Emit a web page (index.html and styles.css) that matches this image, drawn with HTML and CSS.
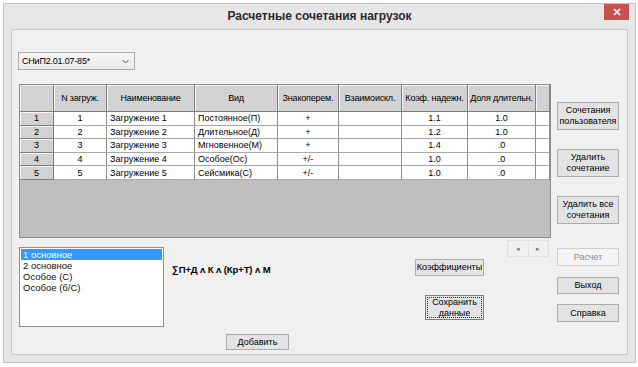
FILE: index.html
```html
<!DOCTYPE html>
<html lang="ru">

<head>
    <meta charset="UTF-8">
    <title>Расчетные сочетания нагрузок</title>
    <link rel="stylesheet" href="styles.css">
</head>

<body>
    <div class="window">
        <div class="titlebar">
            <span></span>
            <h1 class="title">Расчетные сочетания нагрузок</h1>
            <button class="close" title="Закрыть">
                <svg width="8" height="8" viewBox="0 0 8 8"><path d="M1 1L7 7M7 1L1 7" stroke="#fff" stroke-width="1.6"/></svg>
            </button>
        </div>

        <div class="client">
            <div class="combo">
                <span>СНиП2.01.07-85*</span>
                <svg width="7" height="5" viewBox="0 0 7 5"><path d="M0.5 1L3.5 4L6.5 1" fill="none" stroke="#555" stroke-width="1"/></svg>
            </div>

            <div class="main">
                <div class="left">
                    <div class="grid">
                        <table>
                            <thead>
                                <tr>
                                    <th class="c-rh"></th>
                                    <th class="c-n">N загруж.</th>
                                    <th class="c-name">Наименование</th>
                                    <th class="c-kind">Вид</th>
                                    <th class="c-sign">Знакоперем.</th>
                                    <th class="c-excl">Взаимоискл.</th>
                                    <th class="c-coef">Коэф. надежн.</th>
                                    <th class="c-long">Доля длительн.</th>
                                    <th class="c-end"></th>
                                </tr>
                            </thead>
                            <tbody>
                                <tr>
                                    <th>1</th><td class="center">1</td><td>Загружение 1</td><td>Постоянное(П)</td>
                                    <td class="center">+</td><td></td><td class="center">1.1</td><td class="center">1.0</td><td></td>
                                </tr>
                                <tr>
                                    <th>2</th><td class="center">2</td><td>Загружение 2</td><td>Длительное(Д)</td>
                                    <td class="center">+</td><td></td><td class="center">1.2</td><td class="center">1.0</td><td></td>
                                </tr>
                                <tr>
                                    <th>3</th><td class="center">3</td><td>Загружение 3</td><td>Мгновенное(М)</td>
                                    <td class="center">+</td><td></td><td class="center">1.4</td><td class="center">.0</td><td></td>
                                </tr>
                                <tr>
                                    <th>4</th><td class="center">4</td><td>Загружение 4</td><td>Особое(Ос)</td>
                                    <td class="center">+/-</td><td></td><td class="center">1.0</td><td class="center">.0</td><td></td>
                                </tr>
                                <tr>
                                    <th>5</th><td class="center">5</td><td>Загружение 5</td><td>Сейсмика(С)</td>
                                    <td class="center">+/-</td><td></td><td class="center">1.0</td><td class="center">.0</td><td></td>
                                </tr>
                            </tbody>
                        </table>
                    </div>

                    <div class="bottom">
                        <div class="col-list">
                            <ul class="listbox">
                                <li class="selected">1 основное</li>
                                <li>2 основное</li>
                                <li>Особое (С)</li>
                                <li>Особое (б/С)</li>
                            </ul>
                        </div>
                        <div class="col-formula">
                            <p class="formula">∑П+Д ʌ К ʌ (Кр+Т) ʌ М</p>
                            <button class="btn btn-add">Добавить</button>
                        </div>
                        <div class="col-coef">
                            <button class="btn btn-coef">Коэффициенты</button>
                            <button class="btn btn-save focused"><span>Сохранить<br>данные</span></button>
                        </div>
                        <div class="col-scroll">
                            <div class="scroll">
                                <span>◂</span>
                                <span>▸</span>
                            </div>
                        </div>
                    </div>
                </div>

                <div class="side">
                    <button class="btn btn-tall">Сочетания<br>пользователя</button>
                    <button class="btn btn-tall">Удалить<br>сочетание</button>
                    <button class="btn btn-tall">Удалить все<br>сочетания</button>
                    <button class="btn btn-side btn-calc" disabled>Расчет</button>
                    <button class="btn btn-side btn-exit">Выход</button>
                    <button class="btn btn-side btn-help">Справка</button>
                </div>
            </div>
        </div>
    </div>
</body>

</html>
```

FILE: styles.css
```css
* {
    box-sizing: border-box;
}

body {
    margin: 0;
    background: #fff;
    font-family: "Liberation Sans", Arial, sans-serif;
    font-size: 9px;
    color: #000;
}

.window {
    margin: 3px 0 0 3px;
    width: 633px;
    height: 360px;
    border: 1px solid #c2c2c2;
    background: #e6e6e6;
    padding: 0 6px 6px 7px;
}

.titlebar {
    display: grid;
    grid-template-columns: 1fr auto 1fr;
    height: 25px;
    margin: 0 -6px 0 -7px;
}

.title {
    margin: 0;
    font-size: 12px;
    font-weight: bold;
    line-height: 25px;
    color: #2b2b2b;
}

.close {
    justify-self: end;
    align-self: start;
    width: 25px;
    height: 16px;
    margin-right: 6px;
    border: none;
    padding: 0;
    background: #c75050;
    display: flex;
    justify-content: center;
    align-items: center;
}

.client {
    width: 617px;
    height: 326px;
    border: 1px solid #c9c9c9;
    background: #f0f0f0;
    padding: 22px 0 0 7px;
}

/* combo */
.combo {
    width: 117px;
    height: 18px;
    margin-left: -1px;
    border: 1px solid #acacac;
    background: linear-gradient(#f6f6f6, #ebebeb);
    display: flex;
    align-items: center;
    justify-content: space-between;
    padding: 0 5px 0 3px;
    letter-spacing: -0.2px;
}

.main {
    display: flex;
    margin-top: 14px;
}

.left {
    width: 532px;
}

/* grid */
.grid {
    height: 154px;
    background: #bfbfbf;
    border: 1px solid #8c8c8c;
}

.grid table {
    width: 530px;
    table-layout: fixed;
    border-collapse: separate;
    border-spacing: 0;
}

.grid th,
.grid td {
    padding: 0 3px;
    overflow: hidden;
    white-space: nowrap;
    font-weight: normal;
}

.grid th {
    padding: 0;
    background: #d2d2d2;
    border-right: 1px solid #7f7f7f;
    border-bottom: 1px solid #7f7f7f;
    box-shadow: inset 1px 1px #f4f4f4;
    text-align: center;
}

.grid thead th {
    height: 27px;
    letter-spacing: -0.2px;
}

.grid td {
    height: 13.6px;
    background: #fff;
    border-right: 1px solid #8f8f8f;
    border-bottom: 1px solid #a8a8a8;
    line-height: 12px;
}

.grid tbody th {
    height: 13.6px;
    line-height: 12px;
}

.grid .center {
    text-align: center;
}

.c-rh { width: 34px; }
.c-n { width: 53px; }
.c-name { width: 88px; }
.c-kind { width: 83px; }
.c-sign { width: 61px; }
.c-excl { width: 63px; }
.c-coef { width: 66px; }
.c-long { width: 68px; }
.c-end { width: 14px; }

/* bottom */
.bottom {
    display: grid;
    grid-template-columns: 153px 243px 92px 44px;
    height: 117px;
}

.listbox {
    list-style: none;
    margin: 9px 0 0;
    padding: 1px;
    width: 145px;
    height: 80px;
    background: #fff;
    border: 1px solid #8a8f98;
}

.listbox li {
    height: 11px;
    line-height: 11px;
    padding-left: 2px;
    font-size: 9.5px;
    color: #111;
}

.listbox li.selected {
    background: #3399ff;
    color: #fff;
}

.formula {
    margin: 26px 0 0;
    font-weight: bold;
    font-size: 9.5px;
    line-height: 12px;
    letter-spacing: -0.1px;
}

.btn {
    display: flex;
    align-items: center;
    justify-content: center;
    padding: 0;
    border: 1px solid #acacac;
    background: #e3e3e3;
    font-family: inherit;
    font-size: 9px;
    line-height: 11px;
    color: #000;
    text-align: center;
}

.btn-add {
    width: 63px;
    height: 16px;
    margin: 58px 0 0 54px;
}

.btn-coef {
    width: 69px;
    height: 17px;
    margin-top: 21px;
}

.btn-save {
    width: 59px;
    height: 25px;
    margin: 19px 0 0 10px;
}

.btn.focused {
    border-color: #3c8fe0;
    padding: 1px;
}

.btn.focused span {
    display: flex;
    align-items: center;
    justify-content: center;
    width: 100%;
    height: 100%;
    border: 1px dotted #333;
}

.scroll {
    display: flex;
    margin-top: 2px;
    width: 42px;
    height: 17px;
}

.scroll span {
    flex: 1;
    display: flex;
    align-items: center;
    justify-content: center;
    border: 1px solid #e2e2e2;
    font-size: 7px;
    color: #777;
}

.scroll span + span {
    border-left: none;
}

/* right column */
.side {
    display: flex;
    flex-direction: column;
    margin-left: 6px;
    padding-top: 18px;
    width: 62px;
}

.btn-tall {
    height: 28px;
    margin-bottom: 19px;
}

.btn-tall:nth-child(3) {
    margin-bottom: 24px;
}

.btn-calc {
    height: 18px;
    border-color: #cfcfcf;
    background: #f4f4f4;
    color: #8c8c8c;
}

.btn-exit {
    height: 17px;
    margin-top: 11px;
}

.btn-help {
    height: 18px;
    margin-top: 10px;
}
```
